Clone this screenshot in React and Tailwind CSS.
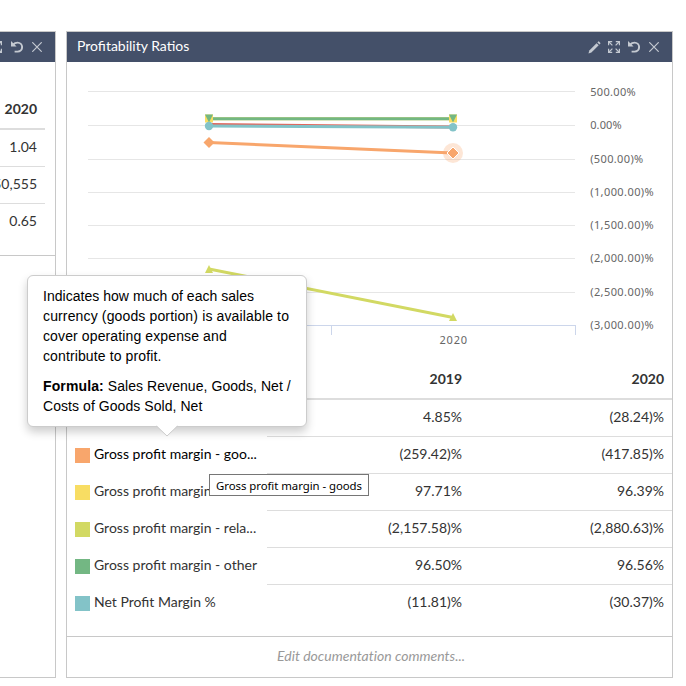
const gridLines = [91.5, 125.5, 159.5, 192.5, 225.5, 258.5, 292.5];

const axisLabels = [
  ['500.00%', 96, 45.5],
  ['0.00%', 129, 31.5],
  ['(500.00)%', 163, 53],
  ['(1,000.00)%', 196, 63.5],
  ['(1,500.00)%', 229, 63.5],
  ['(2,000.00)%', 262, 63.5],
  ['(2,500.00)%', 296, 63.5],
  ['(3,000.00)%', 329, 63.5],
];

const rows = [
  { color: 'bg-[#e2665c]', label: 'Gross profit margin', v: ['4.85%', '(28.24)%'] },
  { color: 'bg-[#f8a66c]', label: 'Gross profit margin - goo...', v: ['(259.42)%', '(417.85)%'], active: true },
  { color: 'bg-[#f8dd63]', label: 'Gross profit margin - ser...', v: ['97.71%', '96.39%'] },
  { color: 'bg-[#d2d963]', label: 'Gross profit margin - rela...', v: ['(2,157.58)%', '(2,880.63)%'] },
  { color: 'bg-[#73b783]', label: 'Gross profit margin - other', v: ['96.50%', '96.56%'] },
  { color: 'bg-[#83c3c8]', label: 'Net Profit Margin %', v: ['(11.81)%', '(30.37)%'] },
];

function PencilIcon() {
  return (
    <svg className="shrink-0" width="13" height="13" viewBox="0 0 13 13" fill="#c4c9d1">
      <path d="M.5 12.5l.8-3L8.6 2.2l2.1 2.1L3.4 11.6z" />
      <path d="M9.4 1.4l.9-.9q.3-.3.7 0l1.4 1.4q.3.4 0 .7l-.9.9z" />
    </svg>
  );
}

function ExpandIcon() {
  return (
    <svg className="shrink-0" width="12" height="12" viewBox="0 0 12 12" fill="none" stroke="#c4c9d1" strokeWidth="1.2">
      <path d="M.6 4.2V.6H4.2M7.8 .6h3.6V4.2M11.4 7.8v3.6H7.8M4.2 11.4H.6V7.8" />
      <path d="M1 1l3.4 3.4M11 1L7.6 4.4M11 11L7.6 7.6M1 11l3.4-3.4" />
    </svg>
  );
}

function UndoIcon() {
  return (
    <svg className="shrink-0" width="12" height="12" viewBox="0 0 12 12" fill="none" stroke="#c4c9d1">
      <path d="M2.2 3.6C3.5 2 5 1.6 6.6 1.6a4.5 4.5 0 0 1 0 9H3.6" strokeWidth="1.9" />
      <path d="M0 0v5.6h5.6z" fill="#c4c9d1" stroke="none" />
    </svg>
  );
}

function CloseIcon() {
  return (
    <svg className="shrink-0" width="10" height="10" viewBox="0 0 10 10" fill="none" stroke="#c4c9d1" strokeWidth="1.2">
      <path d="M.3.3l9.4 9.4M9.7.3L.3 9.7" />
    </svg>
  );
}

function Chart() {
  return (
    <svg className="block shrink-0" width="605" height="298" viewBox="67 62 605 298">
      {gridLines.map((y) => (
        <path key={y} d={`M88 ${y}H575`} stroke="#e6e6e6" />
      ))}
      <path d="M88 325.5H575.5M331.5 325V335M575.5 325V335M88.5 325V335" stroke="#ccd6eb" fill="none" />
      <g fill="none" strokeWidth="3">
        <path d="M209 124.6L453 127" stroke="#e2665c" />
        <path d="M209 142.5L453 153" stroke="#f8a66c" />
        <path d="M209 118.8H453" stroke="#f8dd63" />
        <path d="M209 269L453 317.5" stroke="#d2d963" />
        <path d="M209 118.8H453" stroke="#73b783" />
        <path d="M209 126L453 127.3" stroke="#83c3c8" />
      </g>
      <circle cx="453" cy="153" r="10" fill="#f8a66c" fillOpacity=".28" />
      <path d="M209 137l5.5 5.5-5.5 5.5-5.5-5.5z" fill="#f8a66c" />
      <path d="M453 147l6 6-6 6-6-6z" fill="#f8a66c" stroke="#fff" />
      <path d="M205 114.5h8v8h-8zM449 114.5h8v8h-8z" fill="#f8dd63" />
      <path d="M205 114.5h8l-4 8zM449 114.5h8l-4 8z" fill="#73b783" />
      <path d="M209 265l4 8h-8zM453 313l4 8h-8z" fill="#d2d963" />
      <circle cx="209" cy="126" r="4.2" fill="#83c3c8" />
      <circle cx="453" cy="127.3" r="4.2" fill="#83c3c8" />
      <g fontFamily="'Noto Sans', sans-serif" fontSize="11" fill="#666">
        {axisLabels.map(([t, y, w]) => (
          <text key={t} x="590.2" y={y} textLength={w}>{t}</text>
        ))}
        <text x="439.5" y="344" textLength="27.5">2020</text>
      </g>
    </svg>
  );
}

function LeftPanel() {
  return (
    <section className="flex h-[647px] w-14 flex-col overflow-hidden border border-l-0 border-[#c8c8c8]">
      <header className="flex h-[30px] shrink-0 items-center justify-end gap-[9px] bg-[#445069] pr-[13px]">
        <ExpandIcon />
        <UndoIcon />
        <CloseIcon />
      </header>
      <div className="flex h-[194px] shrink-0 flex-col border-b border-[#c8c8c8] pt-[29px] text-right">
        <div className="mr-2.5 flex h-[39px] items-center justify-end border-b-2 border-[#ddd] pr-2 pb-px font-bold">2020</div>
        <div className="mr-2.5 flex h-[37px] items-center justify-end border-b border-[#ddd] pr-2 pb-[3px]">1.04</div>
        <div className="mr-2.5 flex h-[37px] items-center justify-end border-b border-[#ddd] pr-2 pb-[3px]">50,555</div>
        <div className="mr-2.5 flex h-[36px] items-center justify-end pr-2 pb-[3px]">0.65</div>
      </div>
    </section>
  );
}

function Popover() {
  return (
    <div className="absolute top-[275px] left-[27px] h-[152px] w-[280px] rounded-md border border-[#ccc] bg-white px-[15px] py-2.5 font-['Liberation_Sans',sans-serif] text-[14px] leading-5 text-black shadow-[0_5px_10px_rgba(0,0,0,0.2)]">
      <p className="whitespace-nowrap">
        <span className="tracking-[0.03px]">Indicates how much of each sales</span><br />
        <span className="tracking-[0.14px]">currency (goods portion) is available to</span><br />
        <span className="tracking-[0.12px]">cover operating expense and</span><br />
        <span className="tracking-[0.12px]">contribute to profit.</span>
      </p>
      <p className="mt-2.5 whitespace-nowrap tracking-[0.06px]">
        <b className="tracking-[0.12px]">Formula:</b> Sales Revenue, Goods, Net /<br />
        Costs of Goods Sold, Net
      </p>
      <svg className="absolute top-[149px] left-[128px]" width="22" height="12" viewBox="0 0 22 12">
        <path d="M0 0L11 11L22 0z" fill="#fff" />
        <path d="M.5 1L11 11L21.5 1" fill="none" stroke="#ccc" />
      </svg>
    </div>
  );
}

export default function App() {
  return (
    <main className="relative flex h-[686px] w-[686px] gap-2.5 overflow-hidden bg-white pt-[31px] font-['Lato',sans-serif] text-[14px] leading-5 text-[#333]">
      <LeftPanel />
      <section className="flex h-[647px] w-[607px] flex-col border border-[#c8c8c8]">
        <header className="flex h-[30px] shrink-0 items-center justify-between bg-[#445069] pr-[13px] pl-2.5">
          <h1 className="pb-0.5 text-[14px] text-white">Profitability Ratios</h1>
          <div className="flex items-center">
            <PencilIcon />
            <span className="ml-[7px]"><ExpandIcon /></span>
            <span className="ml-2"><UndoIcon /></span>
            <span className="ml-[9px]"><CloseIcon /></span>
          </div>
        </header>
        <Chart />
        <div className="flex h-[40px] shrink-0 items-center border-b-2 border-[#ddd] font-bold">
          <div className="w-[200px]" />
          <div className="w-[203px] pr-2 text-right">2019</div>
          <div className="w-[202px] pr-2 text-right">2020</div>
        </div>
        <div className="flex h-[236px] shrink-0 flex-col">
          {rows.map((r, i) => (
            <div key={r.label} className="flex h-[37px] shrink-0">
              <div className={'flex w-[200px] items-center pb-[3px] pl-2 whitespace-nowrap ' + (r.active ? 'text-black' : '')}>
                <i className={'mt-[3px] mr-1 size-[15px] ' + r.color} />
                {r.label}
              </div>
              <div className={'flex flex-1 items-center border-[#ddd] ' + (i < 5 ? 'border-b pb-[2px]' : 'pb-[3px]')}>
                <div className="w-[203px] pr-2 text-right">{r.v[0]}</div>
                <div className="w-[202px] pr-2 text-right">{r.v[1]}</div>
              </div>
            </div>
          ))}
        </div>
        <footer className="flex flex-1 items-center justify-center border-t border-[#c8c8c8] pb-0.5 pl-[3px] tracking-[0.01px] text-[#999] italic">
          Edit documentation comments...
        </footer>
      </section>
      <Popover />
      <div className="absolute top-[474px] left-[209px] flex h-[22px] w-[160px] items-center justify-center border border-[#767676] bg-white pt-px font-['Noto_Sans',sans-serif] text-[11.4px] tracking-[-0.05px] whitespace-nowrap text-black">
        Gross profit margin - goods
      </div>
    </main>
  );
}
